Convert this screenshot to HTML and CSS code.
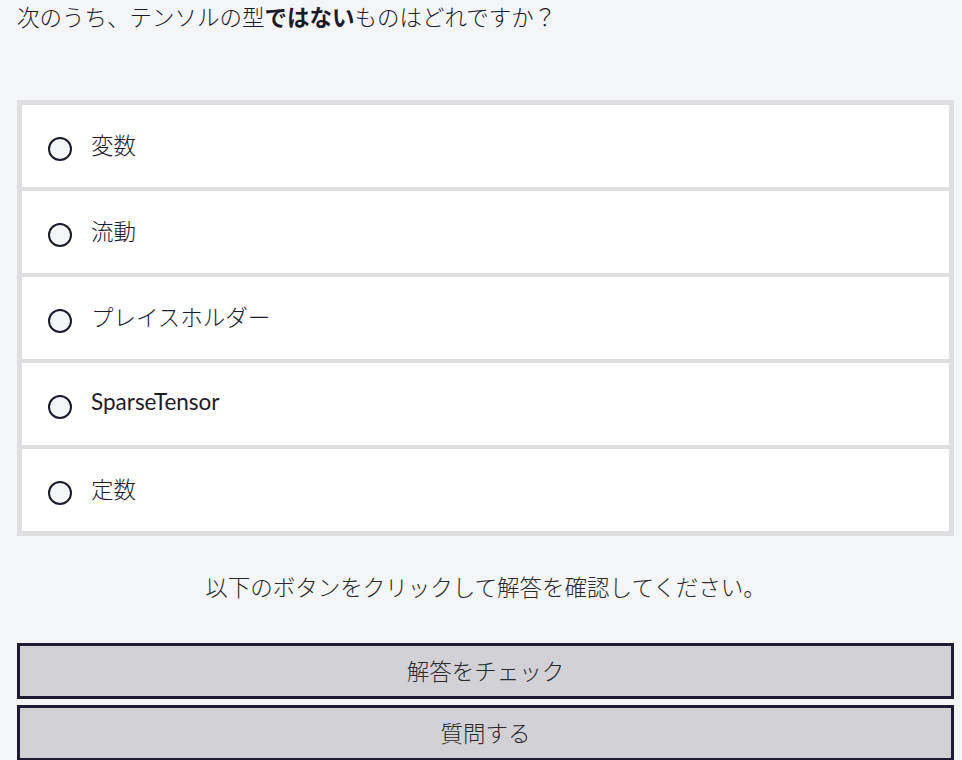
FILE: index.html
```html
<!DOCTYPE html>
<html lang="ja">

<head>
    <meta charset="UTF-8">
    <meta name="viewport" content="width=device-width, initial-scale=1.0">
    <title>クイズ</title>

    <link rel="stylesheet" href="styles.css">
</head>

<body>
    <div class="quiz">
        <p class="question">次のうち、テンソルの型<strong>ではない</strong>ものはどれですか？</p>

        <div class="choices">
            <label class="choice">
                <input type="radio" name="answer" class="choice-radio">
                <span class="choice-text">変数</span>
            </label>
            <label class="choice">
                <input type="radio" name="answer" class="choice-radio">
                <span class="choice-text">流動</span>
            </label>
            <label class="choice">
                <input type="radio" name="answer" class="choice-radio">
                <span class="choice-text">プレイスホルダー</span>
            </label>
            <label class="choice">
                <input type="radio" name="answer" class="choice-radio">
                <span class="choice-text latin">SparseTensor</span>
            </label>
            <label class="choice">
                <input type="radio" name="answer" class="choice-radio">
                <span class="choice-text">定数</span>
            </label>
        </div>

        <p class="hint">以下のボタンをクリックして解答を確認してください。</p>

        <div class="actions">
            <button class="action-btn">解答をチェック</button>
            <button class="action-btn">質問する</button>
        </div>
    </div>
</body>

</html>
```

FILE: styles.css
```css
* {
    box-sizing: border-box;
    font-family: Lato, "Noto Sans CJK JP", sans-serif;
    font-weight: 300;
}

body {
    margin: 0;
    background-color: #f4f5f7;
    color: #1c1b2b;
}

.quiz {
    width: 937px;
    margin-left: 17px;
}

.question {
    margin: 0;
    padding-top: 3px;
    font-size: 22.5px;
    line-height: 30px;
}

.question strong {
    font-weight: 700;
}

.choices {
    margin-top: 67px;
    display: flex;
    flex-direction: column;
    gap: 4px;
    padding: 5px;
    background-color: #dfdfe1;
}

.choice {
    display: flex;
    align-items: center;
    height: 82px;
    padding-left: 26px;
    background-color: white;
    cursor: pointer;
}

.choice-radio {
    appearance: none;
    flex-shrink: 0;
    width: 24px;
    height: 24px;
    margin: 6px 19px 0 0;
    border: 2px solid #1c1b2b;
    border-radius: 50%;
    background-color: #f4f5f7;
    cursor: pointer;
}

.choice-radio:checked {
    background-color: #1c1b2b;
    box-shadow: inset 0 0 0 4px #f4f5f7;
}

.choice-text {
    padding-bottom: 5px;
    font-size: 22.5px;
    color: #1c1b2b;
}

/* latin labels read better at regular weight */
.choice-text.latin {
    font-weight: 400;
}

.hint {
    margin: 37px 0 0;
    text-align: center;
    font-size: 22.5px;
    line-height: 30px;
    color: #2a2a2a;
}

.actions {
    margin-top: 40px;
    display: flex;
    flex-direction: column;
    gap: 6px;
}

.action-btn {
    height: 56px;
    padding-bottom: 4px;
    border: 3px solid #1e1b33;
    background-color: #d2d1d6;
    font-size: 22.5px;
    color: #2a2a2a;
    cursor: pointer;
}

.action-btn:hover {
    background-color: #c4c3c9;
}
```
